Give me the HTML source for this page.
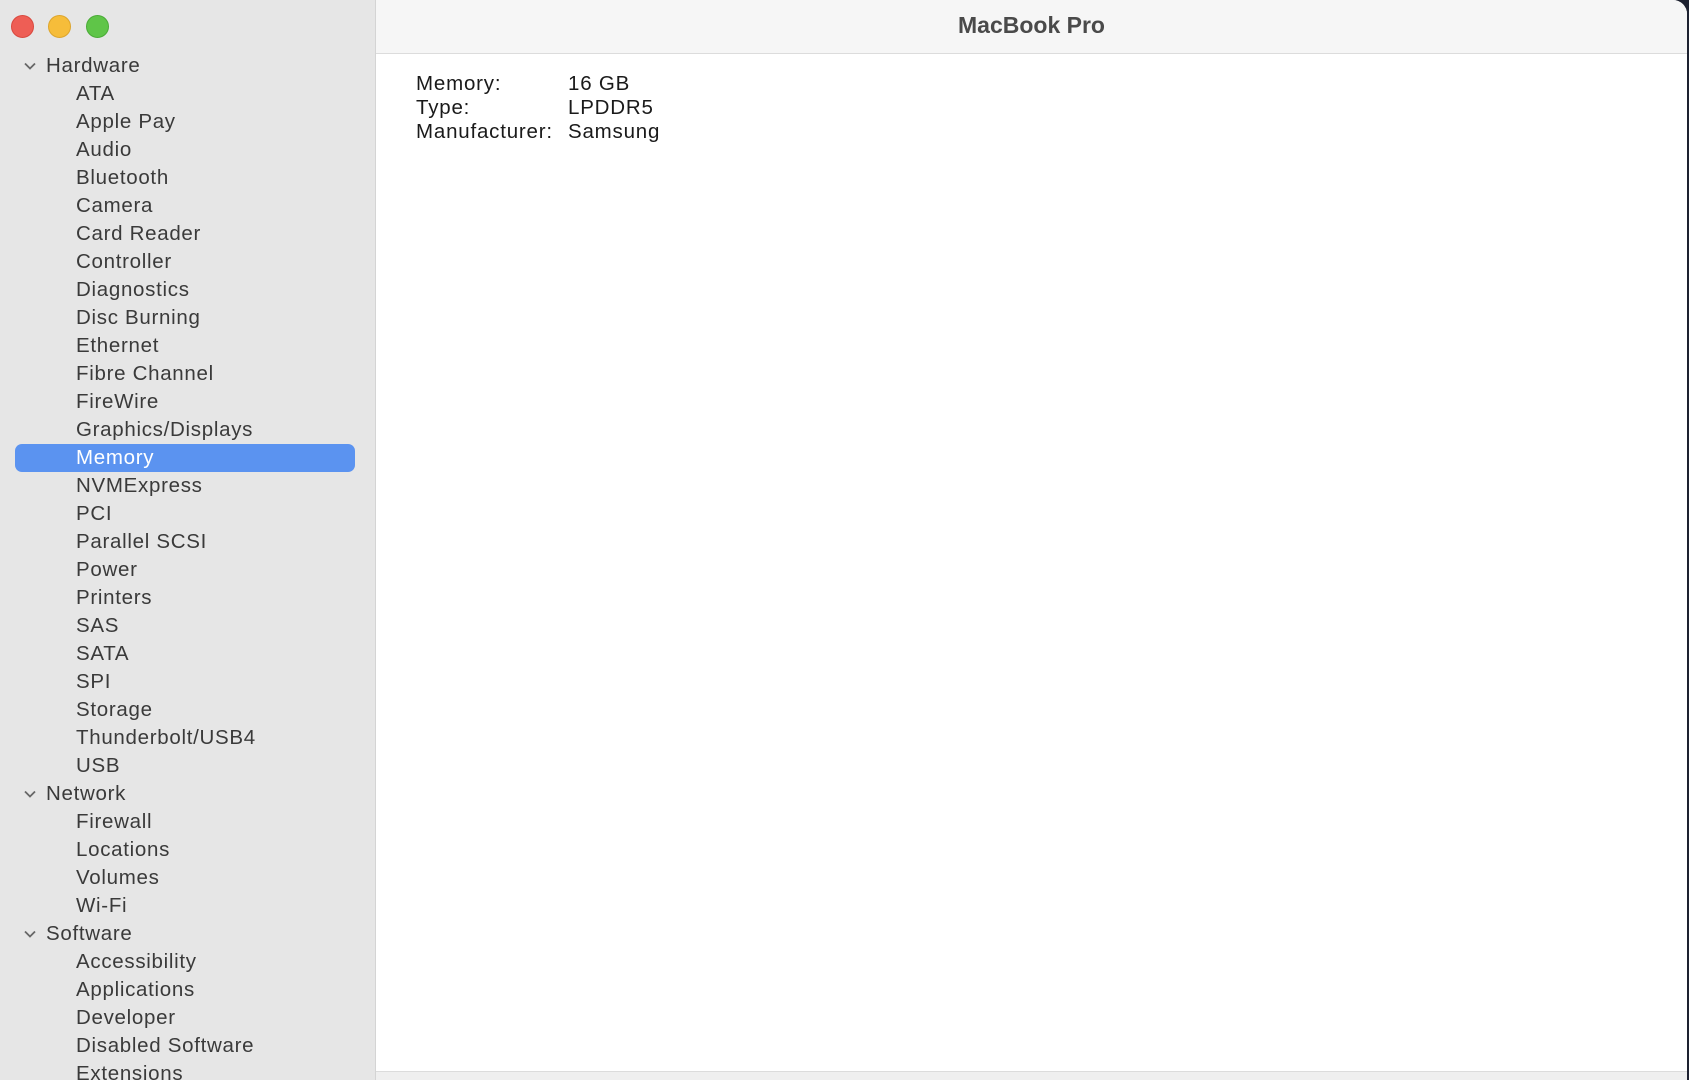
<!DOCTYPE html>
<html><head><style>
html,body{margin:0;padding:0;width:1689px;height:1080px;overflow:hidden;background:#1d2130;font-family:"Liberation Sans",sans-serif}
#win{position:absolute;left:0;top:0;width:1687px;height:1080px;background:#fff;border-top-right-radius:14px;overflow:hidden}
#side{position:absolute;left:0;top:0;width:375px;height:1080px;background:#e6e6e6;border-right:1px solid #d4d4d4}
.dot{position:absolute;top:15px;width:22px;height:22px;border-radius:50%}
#title{position:absolute;left:376px;top:0;right:0;height:53px;background:#f6f6f6;border-bottom:1px solid #dcdcdc;text-align:center;line-height:51px;font-weight:bold;font-size:23px;color:#4a4a4a}
.row{position:absolute;height:28px;line-height:28px;font-size:20.5px;letter-spacing:0.7px;color:#3a3a3a;white-space:nowrap}
.hdr{left:46px}
.item{left:76px}
.sel{position:absolute;left:15px;top:444px;width:340px;height:28px;background:#5b93f0;border-radius:7px}
.chev{position:absolute;left:23px;width:14px;height:14px}
.c{position:absolute;font-size:20.5px;letter-spacing:0.8px;color:#1a1a1a;line-height:24px}
#bot{position:absolute;left:376px;right:0;top:1071px;bottom:0;background:#efefef;border-top:1px solid #dcdcdc}
</style></head><body>
<div id="win">
<div id="side">
<div class="dot" style="left:11px;background:#ee5e55;border:1px solid #d9493f;width:21px;height:21px"></div>
<div class="dot" style="left:48px;background:#f6bd3a;border:1px solid #dda52c;width:21px;height:21px"></div>
<div class="dot" style="left:86px;background:#5fc548;border:1px solid #4aab37;width:21px;height:21px"></div>
<div class="sel"></div>
<svg class="chev" style="top:59px" viewBox="0 0 14 14"><path d="M2 4.5 L7 9.5 L12 4.5" fill="none" stroke="#666" stroke-width="1.8"/></svg>
<svg class="chev" style="top:787px" viewBox="0 0 14 14"><path d="M2 4.5 L7 9.5 L12 4.5" fill="none" stroke="#666" stroke-width="1.8"/></svg>
<svg class="chev" style="top:927px" viewBox="0 0 14 14"><path d="M2 4.5 L7 9.5 L12 4.5" fill="none" stroke="#666" stroke-width="1.8"/></svg>
<div class="row hdr" style="top:52px">Hardware</div>
<div class="row item" style="top:80px">ATA</div>
<div class="row item" style="top:108px">Apple Pay</div>
<div class="row item" style="top:136px">Audio</div>
<div class="row item" style="top:164px">Bluetooth</div>
<div class="row item" style="top:192px">Camera</div>
<div class="row item" style="top:220px">Card Reader</div>
<div class="row item" style="top:248px">Controller</div>
<div class="row item" style="top:276px">Diagnostics</div>
<div class="row item" style="top:304px">Disc Burning</div>
<div class="row item" style="top:332px">Ethernet</div>
<div class="row item" style="top:360px">Fibre Channel</div>
<div class="row item" style="top:388px">FireWire</div>
<div class="row item" style="top:416px">Graphics/Displays</div>
<div class="row item" style="top:444px;color:#fff">Memory</div>
<div class="row item" style="top:472px">NVMExpress</div>
<div class="row item" style="top:500px">PCI</div>
<div class="row item" style="top:528px">Parallel SCSI</div>
<div class="row item" style="top:556px">Power</div>
<div class="row item" style="top:584px">Printers</div>
<div class="row item" style="top:612px">SAS</div>
<div class="row item" style="top:640px">SATA</div>
<div class="row item" style="top:668px">SPI</div>
<div class="row item" style="top:696px">Storage</div>
<div class="row item" style="top:724px">Thunderbolt/USB4</div>
<div class="row item" style="top:752px">USB</div>
<div class="row hdr" style="top:780px">Network</div>
<div class="row item" style="top:808px">Firewall</div>
<div class="row item" style="top:836px">Locations</div>
<div class="row item" style="top:864px">Volumes</div>
<div class="row item" style="top:892px">Wi-Fi</div>
<div class="row hdr" style="top:920px">Software</div>
<div class="row item" style="top:948px">Accessibility</div>
<div class="row item" style="top:976px">Applications</div>
<div class="row item" style="top:1004px">Developer</div>
<div class="row item" style="top:1032px">Disabled Software</div>
<div class="row item" style="top:1060px">Extensions</div>
</div>
<div id="title">MacBook Pro</div>
<div class="c" style="left:416px;top:72px">Memory:</div>
<div class="c" style="left:568px;top:72px">16 GB</div>
<div class="c" style="left:416px;top:96px">Type:</div>
<div class="c" style="left:568px;top:96px">LPDDR5</div>
<div class="c" style="left:416px;top:120px">Manufacturer:</div>
<div class="c" style="left:568px;top:120px">Samsung</div>
<div id="bot"></div>
</div>
</body></html>
